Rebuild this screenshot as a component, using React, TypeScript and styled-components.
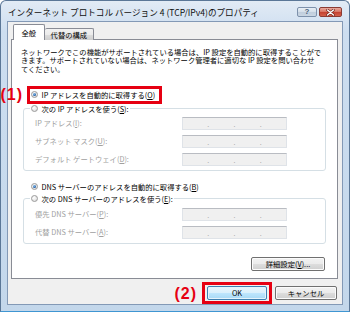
import { FC, ReactNode } from "react";
import styled, { createGlobalStyle, css } from "styled-components";

const GlobalStyle = createGlobalStyle`
  html, body {
    margin: 0;
    padding: 0;
    background: #ffffff;
  }
  body {
    font-family: "Noto Sans CJK JP", "Noto Sans", sans-serif;
  }
`;

const JP = `"Noto Sans CJK JP", "Noto Sans", sans-serif`;
const BODY_SIZE = "7.3px";

const Window = styled.div`
  box-sizing: border-box;
  width: 350px;
  height: 312px;
  display: flex;
  flex-direction: column;
  padding: 0 6px 6px 6px;
  border: 1px solid #5b7797;
  border-bottom-color: #3f96d2;
  border-radius: 6px 6px 0 0;
  background: linear-gradient(180deg, #e2ebf5 0%, #cddef0 10%, #c3d7eb 100%);
`;

const TitleBar = styled.div`
  height: 20px;
  box-sizing: border-box;
  display: flex;
  align-items: center;
  padding: 2px 0 0 1px;
`;

const Title = styled.span`
  font-family: ${JP};
  font-size: 8.6px;
  color: #101010;
  white-space: nowrap;
`;

const TitleButtons = styled.div`
  display: flex;
  gap: 2px;
  margin-left: auto;
  margin-right: 1px;
  align-self: flex-start;
  margin-top: 4px;
`;

const HelpButton = styled.div`
  box-sizing: border-box;
  width: 20px;
  height: 10px;
  border: 1px solid #7d91ab;
  border-radius: 2px;
  background: linear-gradient(180deg, #e8eff6 0%, #d3dee9 50%, #bfcddc 51%, #c9d6e3 100%);
  display: flex;
  align-items: center;
  justify-content: center;
  font-family: "Liberation Sans", sans-serif;
  font-weight: bold;
  font-size: 8px;
  color: #4a5f7a;
  line-height: 1;
`;

const CloseButton = styled.div`
  box-sizing: border-box;
  width: 23px;
  height: 10px;
  border: 1px solid #8a3b33;
  border-radius: 2px;
  background: linear-gradient(180deg, #e9a99d 0%, #d7715f 50%, #c2402f 51%, #d5604a 100%);
  display: flex;
  align-items: center;
  justify-content: center;
`;

const Client = styled.div`
  flex: 1;
  box-sizing: border-box;
  display: flex;
  flex-direction: column;
  border: 1px solid #8399b6;
  background: #f0f0f0;
  padding: 2px 4px 0 3px;
`;

const TabList = styled.div`
  display: flex;
  align-items: flex-end;
  height: 16px;
  margin: 0 0 -1px 2px;
  position: relative;
  z-index: 1;
`;

const Tab = styled.div<{ $active?: boolean }>`
  box-sizing: border-box;
  display: flex;
  align-items: center;
  font-family: ${JP};
  font-size: ${BODY_SIZE};
  color: #000;
  border: 1px solid #898c95;
  border-bottom: none;
  border-radius: 2px 2px 0 0;
  ${({ $active }) =>
    $active
      ? css`
          height: 16px;
          padding: 0 7.5px;
          background: #ffffff;
        `
      : css`
          height: 12px;
          padding: 0 6px;
          border-left: none;
          background: linear-gradient(180deg, #f2f2f2 0%, #ebebeb 50%, #dddddd 51%, #cfcfcf 100%);
        `}
`;

const Panel = styled.div`
  box-sizing: border-box;
  height: 240px;
  display: flex;
  flex-direction: column;
  background: #ffffff;
  border: 1px solid #898c95;
  padding: 0 11px 0 9px;
`;

const Description = styled.p`
  margin: 8px 0 0 0;
  font-family: ${JP};
  font-size: ${BODY_SIZE};
  line-height: 8.3px;
  color: #000;
  white-space: nowrap;
`;

const RadioRow = styled.div<{ $disabled?: boolean }>`
  position: relative;
  align-self: flex-start;
  display: flex;
  align-items: center;
  gap: 4px;
  height: 9px;
  font-family: ${JP};
  font-size: ${BODY_SIZE};
  color: ${({ $disabled }) => ($disabled ? "#a0a0a0" : "#000")};
  white-space: nowrap;
`;

const StandaloneRadio = styled(RadioRow)<{ $top: number }>`
  margin: ${({ $top }) => $top}px 0 0 9.5px;
`;

const RadioDot = styled.span<{ $checked?: boolean }>`
  position: relative;
  box-sizing: border-box;
  flex: none;
  width: 7px;
  height: 7px;
  border-radius: 50%;
  border: 1px solid #9a9a9a;
  background: radial-gradient(circle at 35% 35%, #ffffff 0%, #e6e6e6 60%, #d2d2d2 100%);
  ${({ $checked }) =>
    $checked &&
    css`
      &::after {
        content: "";
        position: absolute;
        left: 1px;
        top: 1px;
        width: 3px;
        height: 3px;
        border-radius: 50%;
        background: radial-gradient(circle at 40% 35%, #8fc4ee 0%, #2f6db3 55%, #163f78 100%);
      }
    `}
`;

const Highlight = styled.span`
  position: absolute;
  left: -3.5px;
  top: -4.5px;
  right: -7px;
  bottom: -4.5px;
  border: 3px solid #e60012;
  pointer-events: none;
`;

const Marker = styled.span`
  font-family: "Liberation Sans", sans-serif;
  font-weight: bold;
  font-size: 16px;
  line-height: 17px;
  letter-spacing: 1px;
  color: #e60012;
  white-space: nowrap;
`;

const RowMarker = styled(Marker)`
  position: absolute;
  left: -30px;
  top: -4px;
`;

const GroupBox = styled.fieldset<{ $top: number }>`
  margin: ${({ $top }) => $top}px 0 0 1.5px;
  padding: 0 0 4px 0;
  min-width: 0;
  border: 1px solid #d5dfe5;
  border-radius: 3px;
`;

const GroupLegend = styled.legend`
  margin-left: 6px;
  padding: 0 1px;
`;

const FieldList = styled.div<{ $top: number }>`
  display: flex;
  flex-direction: column;
  gap: 5px;
  padding: ${({ $top }) => $top}px 0 0 11.5px;
`;

const FieldRow = styled.div`
  display: flex;
  align-items: center;
  height: 13px;
`;

const FieldLabel = styled.span`
  flex: none;
  width: 147px;
  font-family: ${JP};
  font-size: ${BODY_SIZE};
  color: #a0a0a0;
  white-space: nowrap;
`;

const IpBox = styled.div`
  box-sizing: border-box;
  width: 105px;
  height: 13px;
  display: flex;
  align-items: flex-end;
  background: #f0f0f0;
  border: 1px solid #dfe3e8;
  border-top-color: #b9bcc2;
`;

const Octet = styled.span`
  flex: 1;
`;

const IpDot = styled.span`
  width: 2px;
  font-family: "Liberation Sans", sans-serif;
  font-size: 7px;
  line-height: 8px;
  color: #8d8d8d;
  text-align: center;
`;

const Button = styled.button<{ $primary?: boolean; $width: number }>`
  box-sizing: border-box;
  width: ${({ $width }) => $width}px;
  height: 14px;
  padding: 0;
  display: flex;
  align-items: center;
  justify-content: center;
  font-family: ${JP};
  font-size: ${BODY_SIZE};
  color: #000;
  border-radius: 2px;
  border: 1px solid #707070;
  box-shadow: inset 0 0 0 1px #fbfbfb;
  background: linear-gradient(180deg, #f2f2f2 0%, #ebebeb 50%, #dddddd 51%, #cfcfcf 100%);
  ${({ $primary }) =>
    $primary &&
    css`
      border-color: #3c7fb1;
      box-shadow: inset 0 0 0 1px #e5f4fc;
      background: linear-gradient(180deg, #eaf6fd 0%, #d9f0fc 50%, #bee6fd 51%, #a7d9f5 100%);
    `}
`;

const AdvancedButton = styled(Button)`
  align-self: flex-end;
  margin: 13px 1px 0 0;
`;

const ButtonBar = styled.div`
  display: flex;
  align-items: center;
  justify-content: flex-end;
  margin-top: 3px;
  padding-right: 1px;
  gap: 3px;
`;

const BarMarker = styled(Marker)`
  margin-right: 2px;
`;

const OkFrame = styled.div`
  border: 3px solid #e60012;
  padding: 1px 2px;
`;

const IpInput: FC = () => (
  <IpBox>
    <Octet />
    <IpDot>.</IpDot>
    <Octet />
    <IpDot>.</IpDot>
    <Octet />
    <IpDot>.</IpDot>
    <Octet />
  </IpBox>
);

const Field: FC<{ children: ReactNode }> = ({ children }) => (
  <FieldRow>
    <FieldLabel>{children}</FieldLabel>
    <IpInput />
  </FieldRow>
);

const CloseIcon: FC = () => (
  <svg width="9" height="7" viewBox="0 0 9 7">
    <path d="M1.5 1 L7.5 6 M7.5 1 L1.5 6" stroke="#6d2218" strokeWidth="2.6" strokeLinecap="round" />
    <path d="M1.5 1 L7.5 6 M7.5 1 L1.5 6" stroke="#ffffff" strokeWidth="1.4" strokeLinecap="round" />
  </svg>
);

export default function App() {
  return (
    <>
      <GlobalStyle />
      <Window>
        <TitleBar>
          <Title>インターネット プロトコル バージョン 4 (TCP/IPv4)のプロパティ</Title>
          <TitleButtons>
            <HelpButton>?</HelpButton>
            <CloseButton>
              <CloseIcon />
            </CloseButton>
          </TitleButtons>
        </TitleBar>
        <Client>
          <TabList>
            <Tab $active>全般</Tab>
            <Tab>代替の構成</Tab>
          </TabList>
          <Panel>
            <Description>
              ネットワークでこの機能がサポートされている場合は、IP 設定を自動的に取得することがで
              <br />
              きます。サポートされていない場合は、ネットワーク管理者に適切な IP 設定を問い合わせ
              <br />
              てください。
            </Description>

            <StandaloneRadio $top={17.6}>
              <RadioDot $checked />
              <span>
                IP アドレスを自動的に取得する(<u>O</u>)
              </span>
              <Highlight />
              <RowMarker>(1)</RowMarker>
            </StandaloneRadio>

            <GroupBox $top={5}>
              <GroupLegend>
                <RadioRow>
                  <RadioDot />
                  <span>
                    次の IP アドレスを使う(<u>S</u>):
                  </span>
                </RadioRow>
              </GroupLegend>
              <FieldList $top={3.5}>
                <Field>
                  IP アドレス(<u>I</u>):
                </Field>
                <Field>
                  サブネット マスク(<u>U</u>):
                </Field>
                <Field>
                  デフォルト ゲートウェイ(<u>D</u>):
                </Field>
              </FieldList>
            </GroupBox>

            <StandaloneRadio $top={11.5}>
              <RadioDot $checked />
              <span>
                DNS サーバーのアドレスを自動的に取得する(<u>B</u>)
              </span>
            </StandaloneRadio>

            <GroupBox $top={3}>
              <GroupLegend>
                <RadioRow>
                  <RadioDot />
                  <span>
                    次の DNS サーバーのアドレスを使う(<u>E</u>):
                  </span>
                </RadioRow>
              </GroupLegend>
              <FieldList $top={4.5}>
                <Field>
                  優先 DNS サーバー(<u>P</u>):
                </Field>
                <Field>
                  代替 DNS サーバー(<u>A</u>):
                </Field>
              </FieldList>
            </GroupBox>

            <AdvancedButton $width={74}>
              詳細設定(<u>V</u>)...
            </AdvancedButton>
          </Panel>

          <ButtonBar>
            <BarMarker>(2)</BarMarker>
            <OkFrame>
              <Button $primary $width={60}>
                OK
              </Button>
            </OkFrame>
            <Button $width={62}>キャンセル</Button>
          </ButtonBar>
        </Client>
      </Window>
    </>
  );
}
